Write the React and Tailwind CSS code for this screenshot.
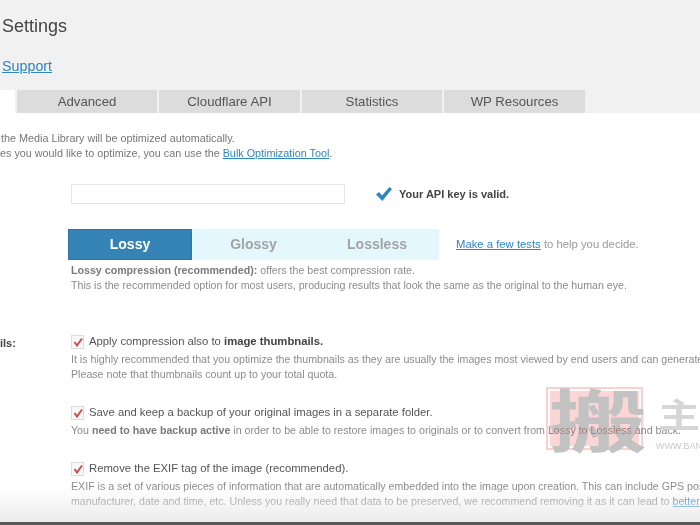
const tabs = [
  ['Advanced', 'w-[140px]'],
  ['Cloudflare API', 'w-[141px]'],
  ['Statistics', 'w-[140px]'],
  ['WP Resources', 'w-[141px]'],
]

function Box() {
  return (
    <span className="flex h-[14px] w-[13px] shrink-0 items-center justify-center border border-[#dcdcdc] bg-[#f8f8f8]">
      <svg viewBox="0 0 10 10" className="h-[10px] w-[10px]">
        <path d="M1.5 5 L4 8.5 L9 1.5" fill="none" stroke="#c9504f" strokeWidth="2" />
      </svg>
    </span>
  )
}

function Option({ children, className }) {
  return (
    <div className={`flex h-[15px] items-center gap-[5px] text-[11.3px] text-[#555] ${className}`}>
      <Box />
      <span>{children}</span>
    </div>
  )
}

function Hint({ children, className = '' }) {
  return <p className={`h-[15px] text-[10.65px] leading-[15px] text-[#8c8c8c] ${className}`}>{children}</p>
}

export default function App() {
  return (
    <div className="relative h-[525px] w-[700px] overflow-hidden whitespace-nowrap bg-white font-['Liberation_Sans',sans-serif] blur-[0.4px]">
      <div className="h-[113px] bg-[#f1f1f1]">
        <h1 className="pl-[2px] pt-[15px] text-[18px] leading-[22px] text-[#444]">Settings</h1>
        <a className="ml-[2px] mt-[20px] block text-[14.3px] leading-[18px] text-[#2f86bd] underline">Support</a>
        <div className="mt-[15px] flex h-[23px] gap-[2px]">
          <div className="w-[15px] bg-white" />
          {tabs.map(([name, w]) => (
            <div key={name} className={`flex items-center justify-center bg-[#dcdcdc] text-[13.2px] text-[#555] ${w}`}>
              {name}
            </div>
          ))}
        </div>
      </div>

      <div className="mt-[18px] text-[10.8px] leading-[15px] text-[#777]">
        <p className="pl-[1px]">the Media Library will be optimized automatically.</p>
        <p>
          es you would like to optimize, you can use the{' '}
          <a className="text-[#2f86bd] underline">Bulk Optimization Tool</a>.
        </p>
      </div>

      <div className="ml-[71px] mt-[23px] flex items-center">
        <div className="h-[20px] w-[274px] border border-[#e6e6e6] bg-white" />
        <svg viewBox="0 0 16 14" className="ml-[31px] h-[14px] w-[16px] text-[#2f86bd]">
          <path d="M0 7.5 L3 5 L6 8.5 L13.5 0 L16 2 L6.3 14 Z" fill="currentColor" />
        </svg>
        <span className="ml-[7px] text-[11px] font-bold text-[#444]">Your API key is valid.</span>
      </div>

      <div className="ml-[68px] mt-[25px] flex items-center">
        <div className="flex h-[31px] w-[371px] bg-[#e3f7fd] text-[14px] font-bold text-[#a3a3a3]">
          <div className="flex w-[124px] items-center justify-center border border-[#2d76a6] bg-[#3583b5] text-white">Lossy</div>
          <div className="flex w-[123px] items-center justify-center">Glossy</div>
          <div className="flex w-[124px] items-center justify-center">Lossless</div>
        </div>
        <p className="ml-[17px] text-[11.3px] text-[#999]">
          <a className="text-[#2f86bd] underline">Make a few tests</a> to help you decide.
        </p>
      </div>

      <div className="ml-[71px] mt-[3px]">
        <Hint>
          <b className="text-[#7a7a7a]">Lossy compression (recommended):</b> offers the best compression rate.
        </Hint>
        <Hint>This is the recommended option for most users, producing results that look the same as the original to the human eye.</Hint>
      </div>

      <div className="relative ml-[71px] mt-[41px]">
        <span className="absolute left-[-71px] top-[1px] text-[11px] font-bold text-[#444]">ils:</span>
        <Option>
          Apply compression also to <b className="text-[#444]">image thumbnails.</b>
        </Option>
        <Hint className="mt-[3px]">It is highly recommended that you optimize the thumbnails as they are usually the images most viewed by end users and can generate</Hint>
        <Hint>Please note that thumbnails count up to your total quota.</Hint>
        <Option className="mt-[23px]">Save and keep a backup of your original images in a separate folder.</Option>
        <Hint className="mt-[3px]">
          You <b className="text-[#7a7a7a]">need to have backup active</b> in order to be able to restore images to originals or to convert from Lossy to Lossless and back.
        </Hint>
        <Option className="mt-[23px]">Remove the EXIF tag of the image (recommended).</Option>
        <Hint className="mt-[3px]">EXIF is a set of various pieces of information that are automatically embedded into the image upon creation. This can include GPS pos</Hint>
        <Hint>
          manufacturer, date and time, etc. Unless you really need that data to be preserved, we recommend removing it as it can lead to{' '}
          <a className="text-[#2f86bd] underline">better</a>
        </Hint>
      </div>

      {/* watermark over the page */}
      <div className="absolute left-[546px] top-[387px] h-[63px] w-[97px] border-[2px] border-[#fbd0d0] bg-white p-[2px] mix-blend-multiply">
        <div className="h-full bg-[#fcd6d6]" />
      </div>
      <span className="absolute left-[546px] top-[381px] w-[104px] scale-x-[1.45] text-center font-['Noto_Sans_CJK_SC',sans-serif] text-[68px] font-bold leading-[74px] text-[#c2c2c2] mix-blend-darken">
        搬
      </span>
      <span className="absolute left-[658px] top-[389px] scale-y-[0.8] font-['Noto_Sans_CJK_SC',sans-serif] text-[42px] font-bold leading-[50px] text-[#d6d6d6]">主</span>
      <span className="absolute left-[656px] top-[440px] text-[9px] text-[#c8c8c8]">WWW.BAN</span>

      {/* bottom fade and window edge */}
      <div className="absolute inset-x-0 bottom-[3px] h-[35px] bg-gradient-to-b from-white/0 to-[#ececec]" />
      <div className="absolute inset-x-0 bottom-0 h-[3px] bg-[#5a5a5a]" />
    </div>
  )
}
